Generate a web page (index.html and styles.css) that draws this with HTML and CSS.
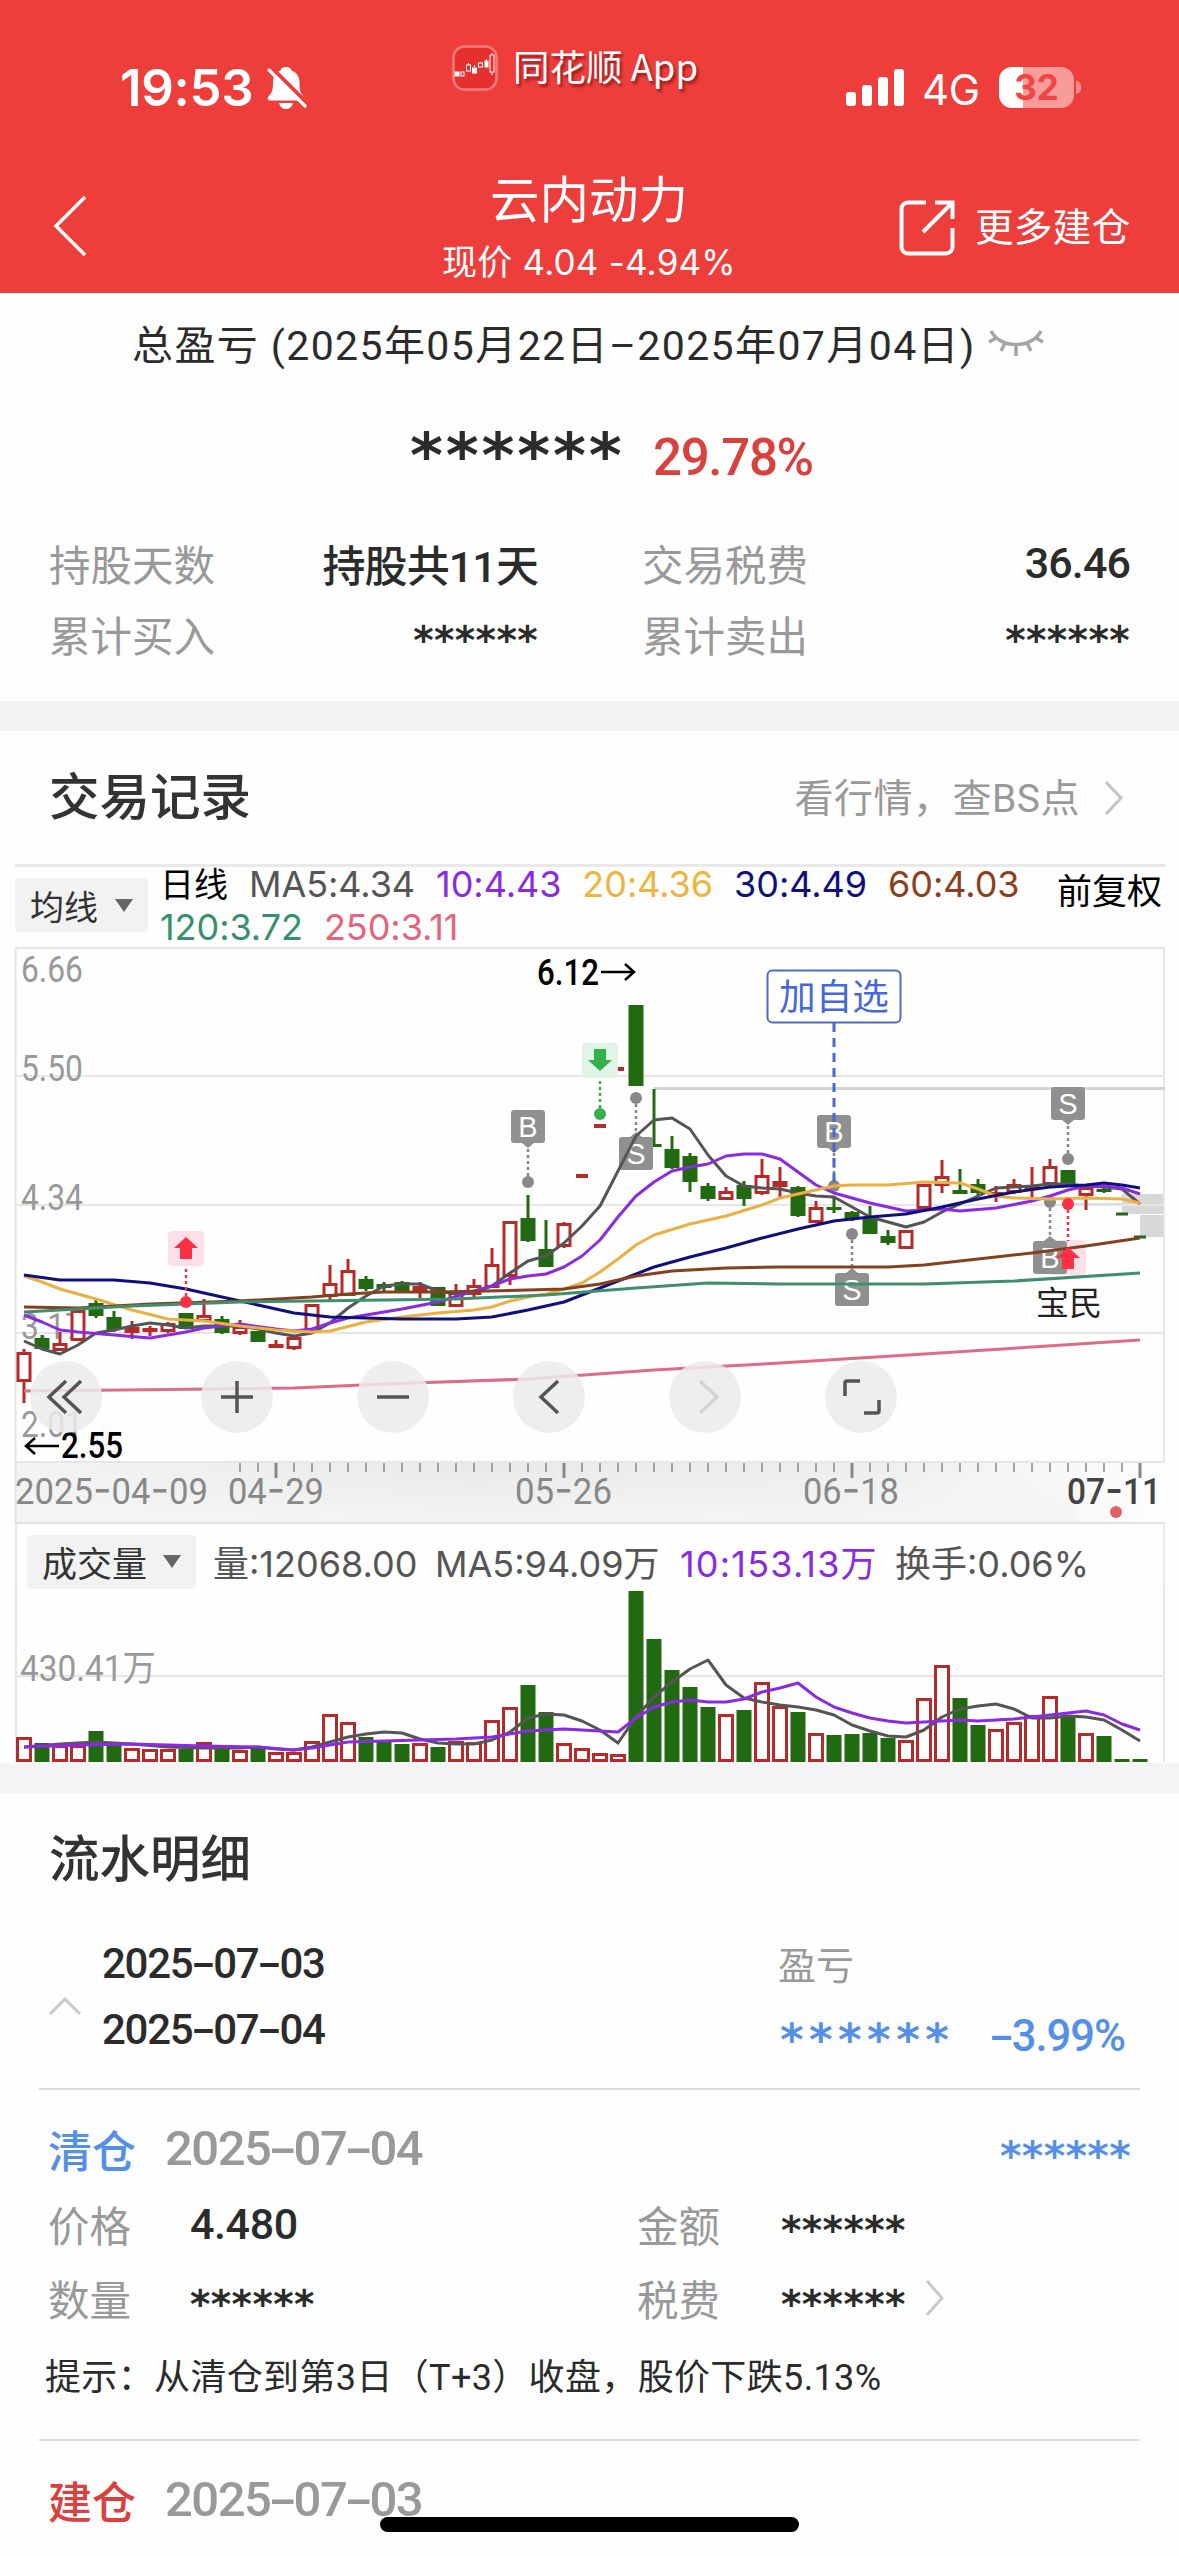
FILE: index.html
```html
<!DOCTYPE html>
<html lang="zh-CN">
<head>
  <meta charset="UTF-8" />
  <meta name="viewport" content="width=device-width,initial-scale=1.0" />
  <title>云内动力</title>
  <link rel="stylesheet" href="styles.css">
</head>
<body>
  <header class="header">
    <div class="status-bar">
      <div class="status-left">
        <span class="clock">19:53</span>
        <svg class="bell" viewBox="0 0 40 44" width="40" height="44">
          <path d="M19 1c-3 0-5 1.500-5.500 3.500C8 6.500 6 11 6 17c0 8-1.500 10-4.500 13.500C0 32.500.5 34.500 3 34.500h32c2.500 0 3-2 1.500-4C33.500 27 32.500 25 32.500 17c0-6-2.500-10.500-8-12.500C24 2.500 22 1 19 1z" fill="#fff"/>
          <path d="M12 37h14c-1 4-3.500 6-7 6s-6-2-7-6z" fill="#fff"/>
          <path d="M4 1L41 38" stroke="#ee3e3c" stroke-width="4"/>
          <path d="M2 4L38 40" stroke="#fff" stroke-width="3.200" stroke-linecap="round"/>
        </svg>
      </div>
      <div class="app-badge">
        <svg viewBox="0 0 46 46" width="46" height="46">
          <rect x="1.500" y="1.500" width="43" height="43" rx="11" fill="#e5302d" stroke="#f77b79" stroke-width="2.500"/>
          <g fill="#fff" stroke="#fff" stroke-width="1">
            <rect x="3" y="27" width="4" height="4"/>
            <rect x="9" y="27" width="3" height="4" fill="none"/>
            <path d="M16.500 18v2M22.500 20v2M28.500 17v1M34.500 14v3M40 8v2M40 27v3"/>
            <rect x="14.500" y="20" width="4" height="6" fill="none"/>
            <rect x="20.500" y="23" width="4" height="5"/>
            <rect x="26.500" y="18" width="4" height="4" fill="none"/>
            <rect x="33" y="16" width="3" height="6"/>
            <rect x="38" y="10" width="4" height="17" fill="none"/>
          </g>
        </svg>
        <span>同花顺 App</span>
      </div>
      <div class="status-right">
        <svg viewBox="0 0 58 37" width="58" height="37" fill="#fff">
          <rect x="0" y="23" width="10" height="14" rx="3"/>
          <rect x="16" y="16" width="10" height="21" rx="3"/>
          <rect x="32" y="8" width="10" height="29" rx="3"/>
          <rect x="48" y="0" width="10" height="37" rx="3"/>
        </svg>
        <span class="network">4G</span>
        <span class="battery">32</span>
      </div>
    </div>
    <div class="nav-bar">
      <svg class="nav-back" viewBox="0 0 36 62" width="36" height="62">
        <path d="M33 2L4 31l29 29" fill="none" stroke="#fff" stroke-width="3.500"/>
      </svg>
      <div class="nav-title">
        <h1>云内动力</h1>
        <p>现价 4.04 -4.94%</p>
      </div>
      <div class="nav-more">
        <svg viewBox="0 0 56 56" width="56" height="56" fill="none" stroke="#fff" stroke-width="4">
          <path d="M27 2.500H9a6.500 6.500 0 0 0-6.500 6.500v38a6.500 6.500 0 0 0 6.500 6.500h38a6.500 6.500 0 0 0 6.500-6.500V28"/>
          <path d="M36 2.500h17.500V19M52 4L24 32"/>
        </svg>
        <span>更多建仓</span>
      </div>
    </div>
  </header>

  <section class="summary">
    <div class="period">
      <span class="period-text">总盈亏 (2025年05月22日–2025年07月04日)</span>
      <svg viewBox="0 0 56 30" width="56" height="30" fill="none" stroke="#a5a5a5" stroke-width="3.500">
        <path d="M3 3c9 18 41 18 50 0M8 10l-7 4M17 15l-4 8M28 17v11M39 15l4 8M48 10l7 4"/>
      </svg>
    </div>
    <div class="total">
      <span class="stars stars-big">******</span>
      <span class="total-rate">29.78%</span>
    </div>
    <div class="stats">
      <span class="label">持股天数</span><span class="value">持股共11天</span>
      <span class="label label-right">交易税费</span><span class="value">36.46</span>
      <span class="label">累计买入</span><span class="stars">******</span>
      <span class="label label-right">累计卖出</span><span class="stars">******</span>
    </div>
  </section>

  <section class="records">
    <div class="records-head">
      <h2>交易记录</h2>
      <div class="records-link">
        <span>看行情，查BS点</span>
        <svg viewBox="0 0 20 36" width="20" height="36"><path d="M2 2l15 16L2 34" fill="none" stroke="#c4c4c4" stroke-width="3"/></svg>
      </div>
    </div>
    <div class="legend">
      <button class="picker">均线<i></i></button>
      <div class="ma-list">
        <span class="cjk">日线</span><span class="ma5">MA5:4.34</span><span class="ma10">10:4.43</span><span class="ma20">20:4.36</span><span class="ma30">30:4.49</span><span class="ma60">60:4.03</span>
        <br><span class="ma120">120:3.72</span><span class="ma250">250:3.11</span>
      </div>
      <span class="adjust">前复权</span>
    </div>
    <svg id="priceChart" viewBox="0 7 1179 577" width="1179" height="577"></svg>
    <div class="volume-head">
      <button class="picker picker-volume">成交量<i></i></button>
      <span class="v1">量:12068.00</span><span class="v2">MA5:94.09万</span><span class="v3">10:153.13万</span><span class="v4">换手:0.06%</span>
    </div>
    <svg id="volumeChart" viewBox="0 1588 1179 175" width="1179" height="175"></svg>
  </section>

  <section class="details">
    <h2>流水明细</h2>
    <div class="round">
      <svg viewBox="0 0 34 20" width="34" height="20"><path d="M2 18L17 3l15 15" fill="none" stroke="#c9c9c9" stroke-width="3"/></svg>
      <div class="round-dates">
        <span>2025<b>-</b>07<b>-</b>03</span>
        <span>2025<b>-</b>07<b>-</b>04</span>
      </div>
      <div class="round-profit">
        <span class="label">盈亏</span>
        <div class="profit-line"><span class="stars stars-wide">******</span><span class="profit-rate"><b>-</b>3.99%</span></div>
      </div>
    </div>
    <div class="trade">
      <div class="trade-head">
        <span class="trade-type sell">清仓</span>
        <span class="trade-date">2025<b>-</b>07<b>-</b>04</span>
        <span class="stars stars-blue">******</span>
      </div>
      <div class="trade-grid">
        <span class="label">价格</span><span class="value">4.480</span>
        <span class="label">金额</span><span class="stars">******</span>
        <span class="label row-start">数量</span><span class="stars">******</span>
        <span class="label">税费</span><span class="stars">******</span>
        <svg class="trade-more" viewBox="0 0 20 36" width="20" height="36"><path d="M2 1l15 17L2 35" fill="none" stroke="#c9c9c9" stroke-width="3"/></svg>
      </div>
      <p class="tip">提示：从清仓到第3日（T+3）收盘，股价下跌5.13%</p>
    </div>
    <div class="trade">
      <div class="trade-head">
        <span class="trade-type buy">建仓</span>
        <span class="trade-date">2025<b>-</b>07<b>-</b>03</span>
      </div>
    </div>
  </section>
  <div class="home-bar"></div>
  <script src="chart.js"></script>
</body>
</html>
```

FILE: styles.css
```css
* { box-sizing: border-box; margin: 0; padding: 0; }
html, body {
  width: 1179px;
  height: 2556px;
  overflow: hidden;
}
body {
  position: relative;
  background: #fefefe;
  color: #2b2b2b;
  font-family: Roboto, "Noto Sans CJK SC", sans-serif;
}
svg { display: block; flex: none; }
span, p, h1, h2 { white-space: nowrap; }
h1, h2 { font-weight: 500; }

/* header */
.header {
  height: 293px;
  background: #ee3e3c;
  color: #fff;
}
.status-bar {
  display: flex;
  height: 150px;
  font-family: Inter, "Noto Sans CJK SC", sans-serif;
}
.status-left {
  display: flex;
  align-items: flex-start;
  width: 452px;
  padding: 66px 0 0 120px;
}
.clock {
  width: 147px;
  font-size: 51px;
  font-weight: 600;
  line-height: 44px;
  letter-spacing: -0.3px;
}
.app-badge {
  display: flex;
  align-items: flex-start;
  width: 394px;
  padding-top: 45px;
}
.app-badge span {
  margin-left: 15px;
  font-family: "Noto Sans CJK SC", sans-serif;
  font-size: 36.500px;
  line-height: 42px;
  text-shadow: 2px 3px 3px rgba(90, 0, 0, .6);
}
.status-right {
  display: flex;
  align-items: flex-start;
  padding-top: 69px;
}
.network { margin-left: 18px; width: 77px; font-size: 42px; line-height: 41px; letter-spacing: -0.5px; }
.battery {
  position: relative;
  width: 75px;
  height: 41px;
  margin-top: -2px;
  border-radius: 13px;
  background: linear-gradient(90deg, #fff 24px, #f79b9b 24px);
  color: #ee4644;
  font-size: 35px;
  font-weight: 700;
  line-height: 41px;
  text-align: center;
}
.battery::after {
  content: "";
  position: absolute;
  right: -7px;
  top: 14px;
  width: 5px;
  height: 13px;
  border-radius: 0 5px 5px 0;
  background: #f58a8a;
}
.nav-bar {
  display: flex;
  padding-top: 13px;
}
.nav-back { margin: 32px 0 0 52px; }
.nav-title {
  width: 500px;
  margin: 1px 60px 0 251px;
  text-align: center;
}
.nav-title h1 { font-size: 49.500px; line-height: 74px; font-weight: 400; }
.nav-title p { font: 35px/48px Inter, "Noto Sans CJK SC", sans-serif; letter-spacing: .2px; }
.nav-more { display: flex; align-items: flex-start; margin: 37px 0 0 0; }
.nav-more span { margin-left: 20px; font-size: 38.800px; line-height: 55px; }

/* summary */
.summary { height: 408px; background: #fefefe; }
.period {
  display: flex;
  align-items: center;
  padding: 22px 0 0 132px;
  height: 78px;
}
.period-text { width: 856px; margin-top: -3px; font-size: 41px; letter-spacing: 1.400px; }
.stars {
  font-family: "DejaVu Sans", sans-serif;
  font-weight: 700;
  font-size: 39px;
  letter-spacing: .4px;
}
.total { display: flex; height: 160px; padding: 50px 0 0 410px; }
.stars-big { width: 243px; margin-top: -7px; font-size: 63px; line-height: 84px; letter-spacing: 2.800px; }
.total-rate { color: #d9413f; font-size: 51px; font-weight: 500; line-height: 73px; letter-spacing: -1.300px; }
.stats {
  display: grid;
  grid-template-columns: 220px 269px 246px 346px;
  grid-auto-rows: 71px;
  margin-top: -4px;
  padding: 0 49px;
  align-items: center;
}
.label { color: #999; font-size: 41.500px; font-weight: 400; }
.label-right { padding-left: 104px; }
.value { font-size: 43px; font-weight: 500; text-align: right; letter-spacing: -.9px; }
.stats .stars { text-align: right; padding-top: 14px; }

/* trade records and charts */
.records { border-top: 30px solid #f3f3f3; }
.records-head {
  display: flex;
  justify-content: space-between;
  align-items: center;
  height: 133px;
  padding: 0 55px 0 49px;
}
.records-head h2, .details h2 { font-size: 50.500px; line-height: 70px; color: #333; }
.records-link { display: flex; align-items: center; color: #999; font-size: 39px; letter-spacing: .5px; }
.records-link span { margin-top: -5px; }
.records-link svg { margin-left: 24px; }
.legend {
  display: flex;
  height: 83px;
  margin: 0 13px 0 15px;
  border-top: 3px solid #e9e9e9;
}
.picker {
  display: flex;
  flex: none;
  align-items: center;
  justify-content: space-between;
  width: 133px;
  height: 54px;
  margin-top: 11px;
  padding: 0 15px;
  border: none;
  border-radius: 4px;
  background: #f2f2f2;
  color: #333;
  font: 34px "Noto Sans CJK SC", sans-serif;
}
.picker i {
  border: 9px solid transparent;
  border-top: 13px solid #666;
  border-bottom: 0;
}
.ma-list {
  flex: none;
  width: 909px;
  padding-left: 12px;
  font: 36px/42px Inter, "Noto Sans CJK SC", sans-serif;
  letter-spacing: -.05px;
  margin-top: -4px;
}
.ma-list span { display: inline-block; margin-right: 21px; }
.ma-list .cjk { font-size: 34px; color: #000; }
.ma5 { color: #555; }
.ma10 { color: #8a2be2; }
.ma20 { color: #edb440; }
.ma30 { color: #10107c; }
.ma60 { color: #8b4020; }
.ma120 { color: #36906c; }
.ma250 { color: #e5647c; }
.adjust { font-size: 35px; line-height: 52px; color: #000; }
.volume-head {
  display: flex;
  align-items: center;
  height: 64px;
  margin: 0 14px 0 15px;
  padding-left: 10px;
  border: solid #e8e8e8;
  border-width: 0 2px 0 2px;
  color: #555;
  font: 36px "Inter", "Noto Sans CJK SC", sans-serif;
}
.picker-volume { width: 169px; margin: 11px 0 0; font-size: 35px; }
.volume-head span { padding-top: 10px; }
.v1 { margin-left: 17px; width: 222px; }
.v2 { width: 245px; }
.volume-head .v3 { width: 215px; color: #8a2be2; letter-spacing: 1.200px; }

/* cash flow */
.details { border-top: 30px solid #f4f3f5; padding: 32px 39px 0; }
.details h2 { padding-left: 10px; }
.details b { display: inline-block; margin: 0 4px; transform: scaleX(1.7); font-weight: inherit; }
.round {
  display: flex;
  height: 195px;
  padding-left: 9px;
  border-bottom: 2px solid #dcdcdc;
}
.round svg { margin-top: 101px; }
.round-dates {
  display: flex;
  flex-direction: column;
  width: 696px;
  padding: 36px 0 0 20px;
  font-size: 42px;
  font-weight: 500;
  line-height: 66px;
  letter-spacing: -1.300px;
}
.round-profit { padding-top: 43px; }
.round-profit .label { display: block; font-size: 38px; line-height: 56px; }
.profit-line { display: flex; color: #5590e8; }
.stars-wide { width: 210px; margin: 3px 0 0 2px; font-size: 45px; letter-spacing: 5.500px; line-height: 85px; }
.profit-rate { font-size: 43.500px; font-weight: 500; line-height: 85px; letter-spacing: -1px; }
.trade { border-bottom: 2px solid #dcdcdc; padding-left: 9px; }
.trade-head { display: flex; align-items: center; height: 122px; padding-bottom: 5px; }
.trade-type { width: 117px; font-size: 44px; font-weight: 500; }
.trade-date { width: 259px; color: #999; font-size: 49px; font-weight: 500; letter-spacing: -1.500px; }
.sell, .stars-blue { color: #5590e8; }
.buy { color: #d9413f; }
.stars-blue { margin: 15px 0 0 576px; font-size: 41px; }
.trade-grid {
  display: grid;
  grid-template-columns: 142px 447px 144px 144px 20px;
  grid-auto-rows: 74px;
  align-items: center;
  margin-top: -25px;
}
.row-start { grid-column: 1; }
.trade-grid .value { text-align: left; letter-spacing: -.4px; }
.trade-grid .stars { padding-top: 12px; }
.trade-more { grid-column: 5; grid-row: 2; }
.tip { height: 104px; margin-left: -3px; line-height: 87px; font-size: 36px; letter-spacing: .35px; }
.home-bar {
  position: absolute;
  left: 380px;
  top: 2517px;
  width: 419px;
  height: 15px;
  border-radius: 8px;
  background: #000;
}
```

FILE: chart.js
```javascript
const RED = '#b72a2a';
const GREEN = '#226a12';
const xAt = i => 24 + 18 * i;

// high, body top, body bottom, low, r = up / g = down / d, e = single dash
const candles = [
  [409,412,442,463,'r'],[395,398,409,410,'g'],[392,403,411,411,'r'],[370,370,401,401,'r'],[360,363,376,378,'g'],
  [371,377,390,392,'g'],[381,387,393,399,'r'],[386,388,390,396,'r'],[382,383,392,393,'r'],[373,373,389,389,'g'],
  [359,375,382,382,'r'],[376,379,393,394,'g'],[380,386,394,395,'r'],[391,391,402,402,'g'],[400,404,406,408,'r'],
  [396,397,409,410,'r'],[364,364,393,393,'r'],[325,343,357,361,'r'],[319,330,356,356,'r'],[336,339,349,351,'g'],
  [342,344,348,351,'g'],[341,342,351,352,'g'],[342,346,351,359,'r'],[347,347,366,366,'g'],[344,352,367,367,'r'],
  [339,345,355,357,'r'],[308,324,348,348,'r'],[281,281,337,345,'r'],[255,278,301,302,'g'],[280,309,327,327,'g'],
  [282,283,307,308,'r'],[0,236,0,0,'d'],[0,186,0,0,'d'],[0,129,0,0,'d'],[65,65,146,146,'g'],
  [149,204,205,206,'g'],[196,209,228,229,'g'],[213,216,242,252,'g'],[243,246,259,261,'g'],[247,251,260,260,'r'],
  [241,245,259,266,'g'],[219,235,254,255,'r'],[227,241,247,258,'r'],[246,247,276,277,'g'],[261,267,283,283,'r'],
  [256,267,270,273,'g'],[271,272,279,281,'g'],[266,278,294,294,'g'],[290,296,303,305,'g'],[290,290,309,309,'r'],
  [244,244,269,269,'r'],[220,236,246,253,'r'],[229,250,254,254,'g'],[239,244,253,255,'g'],[246,252,255,262,'r'],
  [239,244,253,254,'r'],[227,245,247,257,'r'],[219,226,245,246,'r'],[230,230,245,245,'g'],[246,247,256,270,'r'],
  [247,249,252,253,'g'],[0,274,0,0,'e'],[0,297,0,0,'e']
];

// pairs of day index, y
const averages = [
  ['#df6c86', [0,451, 8,449.500, 15,448, 20,444, 28,439, 35,430, 42,423, 50,414, 56,407, 62,400]],
  ['#555555', [0,401, 1,409, 2,414, 3,405, 4,393, 5,390, 6,386, 7,383, 8,385, 9,388, 10,386, 12,386, 13,389, 14,393, 15,396, 16,393, 17,383, 18,368, 19,356, 20,346, 21,344, 22,344, 23,351, 24,354, 25,352, 26,346, 27,333, 28,321, 29,316, 30,303, 31,286, 32,266, 33,231, 34,196, 35,180, 36,178, 37,189, 38,215, 39,236, 40,246, 41,248, 42,249, 43,253, 44,256, 45,257, 46,267, 47,277, 48,282, 49,287, 50,282, 51,272, 52,264, 53,256, 54,248, 55,247, 56,246, 57,244, 58,244, 59,246, 60,247, 61,249, 62,264]],
  ['#8a2be2', [0,375, 1,382, 2,390, 3,392, 5,395, 7,398, 9,392, 10,388, 12,384, 14,389, 15,391, 16,389, 17,383, 18,378, 20,372, 21,369, 23,362, 25,351, 26,346, 27,339, 28,336, 29,334, 30,327, 31,316, 32,300, 33,277, 34,256, 35,242, 36,231, 37,227, 38,224, 39,216, 40,214, 41,214, 42,219, 43,232, 44,245, 45,253, 47,263, 49,271, 51,269, 52,271, 54,268, 56,261, 57,256, 58,250, 59,246, 60,246, 61,248, 62,254]],
  ['#eab142', [0,336, 1,342, 2,349, 4,359, 6,370, 8,379, 10,381, 12,386, 14,390, 16,392, 17,391, 19,382, 21,377, 23,373, 25,370, 26,367, 27,361, 28,357, 29,354, 30,349, 31,343, 32,332, 33,319, 34,305, 35,295, 37,284, 39,276, 41,265, 42,258, 43,254, 44,250, 45,246, 46,245, 48,245, 50,242, 52,243, 53,249, 54,256, 55,258, 57,259, 59,258, 61,259, 62,263]],
  ['#10107c', [0,335, 2,340, 5,340, 7,343, 9,349, 11,357, 13,365, 15,373, 17,377, 19,378, 21,379, 24,379, 26,377, 28,370, 30,362, 31,355, 33,341, 35,327, 37,317, 39,308, 41,298, 43,289, 45,281, 47,277, 49,274, 51,267, 53,259, 55,252, 57,247, 59,245, 60,243, 61,245, 62,248]],
  ['#85401e', [0,367, 3,368, 7,364, 12,361, 16,357, 18,354, 20,352, 23,352, 28,350, 30,349, 32,344, 34,336, 36,331, 39,328, 42,327, 48,327, 50,325, 53,319, 56,313, 59,306, 62,298]],
  ['#3f8f6f', [0,372, 6,366, 12,362, 20,360, 24,359, 29,355, 34,348, 38,343, 42,344, 50,344, 55,341, 62,333]]
];

const volumes = '1737r 1743g 1745r 1745r 1731g 1745g 1748r 1749r 1749r 1749g 1742r 1747g 1750r 1747g 1752r 1752r 1741r 1714r 1722r 1737g 1742g 1744g 1743r 1747g 1741r 1742r 1720r 1707r 1685g 1712g 1743r 1748r 1753r 1754r 1591g 1639g 1670g 1687g 1707g 1714r 1710g 1682r 1706r 1712g 1733r 1735g 1734g 1733g 1738g 1740r 1698r 1665r 1698g 1725g 1729r 1722r 1715r 1696r 1717g 1733r 1736g 1759g 1759g'.split(' ');
const volumeAverages = [
  ['#555555', [0,1747, 2,1744, 4,1742, 6,1744, 8,1747, 10,1748, 12,1748, 13,1747, 14,1749, 15,1750, 16,1747, 17,1742, 18,1737, 19,1734, 20,1732, 21,1733, 22,1739, 23,1743, 24,1744, 25,1744, 26,1740, 27,1732, 28,1718, 29,1714, 30,1715, 31,1721, 32,1730, 33,1743, 34,1717, 35,1697, 36,1682, 37,1669, 38,1660, 39,1685, 40,1698, 41,1702, 42,1705, 43,1707, 44,1710, 45,1715, 46,1725, 47,1731, 48,1736, 49,1737, 50,1730, 51,1717, 52,1709, 53,1706, 54,1704, 55,1709, 56,1718, 57,1718, 58,1716, 59,1717, 60,1720, 61,1730, 62,1741]],
  ['#8a2be2', [0,1747, 3,1745, 6,1744, 10,1746, 13,1747, 15,1750, 16,1748, 18,1742, 20,1741, 24,1739, 26,1737, 28,1731, 30,1729, 31,1730, 33,1732, 34,1718, 35,1707, 36,1702, 37,1700, 38,1702, 39,1702, 40,1699, 41,1692, 42,1688, 43,1683, 44,1697, 45,1707, 46,1713, 47,1718, 48,1721, 49,1723, 50,1722, 52,1720, 53,1721, 55,1719, 57,1715, 59,1711, 60,1715, 61,1724, 62,1730]]
];

const rect = (x, y, w, h, fill, extra = '') => `<rect x="${x}" y="${y}" width="${w}" height="${h}" fill="${fill}" ${extra}/>`;
const line = (x1, y1, x2, y2, color, w = 2, extra = '') => `<line x1="${x1}" y1="${y1}" x2="${x2}" y2="${y2}" stroke="${color}" stroke-width="${w}" ${extra}/>`;
const text = (x, y, w, str, fill, size = 36, extra = '') => `<text x="${x}" y="${y}" textLength="${w}" lengthAdjust="spacingAndGlyphs" fill="${fill}" font-size="${size}" ${extra}>${str}</text>`;
// axis dates take the wider Inter hyphen
const date = (x, w, str, fill, extra) => text(x, 564, w, str.replace(/-/g, '<tspan font-family="Inter" font-size="42">-</tspan>'), fill, 36, extra);

function curve([color, pts]) {
  let d = '';
  for (let i = 0; i < pts.length; i += 2) d += `${i ? 'L' : 'M'}${xAt(pts[i])} ${pts[i + 1]}`;
  return `<path d="${d}" fill="none" stroke="${color}" stroke-width="3" stroke-linejoin="round"/>`;
}

function candle([high, top, bottom, low, type], i) {
  const x = xAt(i);
  if (type === 'd') return rect(x - 6, top - 2, 12, 4, RED);
  if (type === 'e') return rect(x - 6, top - 1.5, 12, 3, GREEN);
  const color = type === 'r' ? RED : GREEN;
  let out = high < top ? line(x, high, x, top, color, 3) : '';
  if (low > bottom) out += line(x, bottom, x, low, color, 3);
  if (type === 'g') return out + rect(x - 7.5, top, 15, Math.max(3, bottom - top), color);
  return out + rect(x - 6, top + 1.5, 12, Math.max(1, bottom - top - 3), bottom - top > 6 ? '#fff' : color, `stroke="${color}" stroke-width="3"`);
}

// dot on the candle, dotted lead and the lettered flag
function flag(x, dot, top, letter) {
  const below = top > dot;
  const edge = below ? top : top + 33;
  const tip = below ? edge - 5 : edge + 5;
  return line(x, dot, x, tip, '#888', 2.5, 'stroke-dasharray="3 3"') +
    `<circle cx="${x}" cy="${dot}" r="6" fill="#888"/>` +
    rect(x - 17, top, 34, 33, '#909090', 'rx="3"') +
    `<path d="M${x - 6} ${edge}L${x} ${tip}L${x + 6} ${edge}z" fill="#909090"/>` +
    `<text x="${x}" y="${top + 27}" fill="#fff" font-size="29" text-anchor="middle" font-family="Liberation Sans">${letter}</text>`;
}

const arrowBox = (x, top, bg) => rect(x - 18, top, 36, 35, bg, 'rx="4"');

function arrow(x, dot, top, color, up) {
  const c = top + 17;
  const s = up ? -1 : 1;
  return line(x, dot, x, top > dot ? top : top + 35, color, 2.5, 'stroke-dasharray="3 3"') +
    `<circle cx="${x}" cy="${dot}" r="6" fill="${color}"/>` +
    `<path d="M${x - 6} ${c - s * 11}h12V${c}h6L${x} ${c + s * 11}L${x - 12} ${c}h6z" fill="${color}"/>`;
}

let p = '<defs><linearGradient id="axis"><stop offset="0" stop-color="#f3f3f4"/><stop offset=".4" stop-color="#e9e9eb"/><stop offset=".75" stop-color="#eeeeef"/><stop offset="1" stop-color="#fdfdfd"/></linearGradient><linearGradient id="fade" x2="0" y2="1"><stop offset="0" stop-color="#f4f4f4" stop-opacity="0"/><stop offset="1" stop-color="#f4f4f4"/></linearGradient></defs>';
p += rect(16, 522, 1148, 61, 'url(#axis)') + rect(16, 522, 1060, 61, 'url(#fade)');
p += rect(1122, 254, 43, 20, '#d8d8d8') + rect(1140, 275, 25, 22, '#d8d8d8');
for (const y of [8, 136, 265, 393, 522]) p += line(15, y, 1165, y, '#e6e6e6');
p += line(15.5, 8, 15.5, 584, '#e4e4e4') + line(1164, 8, 1164, 522, '#e6e6e6') + line(15, 583, 1165, 583, '#e2e2e2');
p += line(654, 148.5, 1165, 148.5, '#d4d4d4', 3) + line(1066, 264, 1122, 264, '#ddd');
[['6.66', 42], ['5.50', 141], ['4.34', 270], ['3.17', 398.5], ['2.01', 497]].forEach(([s, y]) => p += text(21, y, 62, s, '#999', 36));
p += candles.map(candle).join('');
p += arrowBox(186, 291, '#fddfe8') + arrowBox(600, 103, '#e0f5e7') + arrowBox(1068, 300, '#fddfe8');
p += flag(528, 242, 170, 'B') + flag(636, 158, 197, 'S') + flag(834, 246, 175, 'B') + flag(852, 294, 333, 'S') + flag(1050, 262, 301, 'B') + flag(1068, 219, 147, 'S');
p += averages.map(curve).join('');
p += arrow(186, 362, 291, '#fb3043', true) + arrow(600, 174, 103, '#35ae4c', false) + arrow(1068, 264, 301, '#fb3043', true);
p += line(834, 83, 834, 242, '#4668d8', 3, 'stroke-dasharray="9 6"');
p += rect(767.5, 30.5, 133, 52, '#fff', 'rx="5" stroke="#4a6bc8" stroke-width="2"') + text(779, 70, 110, '加自选', '#4668d8');
p += text(1036, 375, 66, '宝民', '#222', 33);
p += text(61, 518, 62, '2.55', '#000', 36, 'font-weight="500"') + '<path d="M59 506H27M35 498l-9 8 9 8" fill="none" stroke="#000" stroke-width="2.500"/>';
p += text(537, 45, 62, '6.12', '#000', 36, 'font-weight="500"') + '<path d="M601 32h32M625 24l9 8-9 8" fill="none" stroke="#000" stroke-width="2.500"/>';

// round controls over the chart
const icons = [
  'M0-16l-17 16L0 16M15-16L-2 0 15 16', 'M-16 0H16M0-16V16', 'M-16 0H16', 'M9-16L-8 0 9 16', 'M-5-16L12 0-5 16', 'M-16-1V-14a2 2 0 0 1 2-2H-1M18 3V14a2 2 0 0 1-2 2H3'
];
icons.forEach((d, i) => {
  const x = [66, 237, 393, 549, 705, 861][i];
  p += `<circle cx="${x}" cy="457" r="36" fill="#ebebeb" fill-opacity=".85"/><path transform="translate(${x} 457)" d="${d}" fill="none" stroke="${i === 4 ? '#d4d4d4' : '#555'}" stroke-width="3.500"/>`;
});

for (let i = 12; i < 63; i++) {
  const major = [14, 30, 46, 62].includes(i);
  p += line(xAt(i), 523, xAt(i), major ? 538 : 532, '#888', major ? 3 : 1.5);
}
p += date(15, 193, '2025-04-09', '#888') + date(228, 96, '04-29', '#888') + date(515, 97, '05-26', '#888') + date(803, 96, '06-18', '#888') + date(1067, 94, '07-11', '#444', 'font-weight="500"');
p += '<circle cx="1116" cy="572" r="6" fill="#e46064"/>';
document.getElementById('priceChart').innerHTML = p;

let v = line(16, 1588, 16, 1762, '#e6e6e6') + line(1164, 1588, 1164, 1762, '#e6e6e6') + line(16, 1676, 1164, 1676, '#e6e6e6');
v += text(20, 1681, 136, '430.41万', '#999');
volumes.forEach((s, i) => {
  const top = parseInt(s);
  v += s.endsWith('g') ? rect(xAt(i) - 7.5, top, 15, 1762 - top, GREEN)
    : rect(xAt(i) - 6.5, top + 1.5, 13, 1759 - top, '#fff', `stroke="${RED}" stroke-width="3"`);
});
v += volumeAverages.map(curve).join('');
document.getElementById('volumeChart').innerHTML = v;
```
